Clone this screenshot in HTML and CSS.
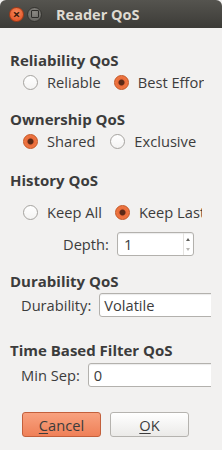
FILE: index.html
```html
<!DOCTYPE html>
<html lang="en">
<head>
  <meta charset="UTF-8">
  <title>Reader QoS</title>
  <link rel="stylesheet" href="styles.css">
</head>
<body>
  <div class="window">
    <div class="titlebar">
      <span class="win-btn close">&#215;</span>
      <span class="win-btn maximize"><span class="square"></span></span>
      <span class="title">Reader QoS</span>
    </div>

    <div class="content">
      <div class="group">
        <div class="heading">Reliability QoS</div>
        <div class="radio-row">
          <label class="option"><input type="radio" name="reliability"> Reliable</label>
          <label class="option"><input type="radio" name="reliability" checked> Best Effort</label>
        </div>
      </div>

      <div class="group">
        <div class="heading">Ownership QoS</div>
        <div class="radio-row">
          <label class="option wide"><input type="radio" name="ownership" checked> Shared</label>
          <label class="option"><input type="radio" name="ownership"> Exclusive</label>
        </div>
      </div>

      <div class="group history">
        <div class="heading">History QoS</div>
        <div class="radio-row">
          <label class="option"><input type="radio" name="history"> Keep All</label>
          <label class="option"><input type="radio" name="history" checked> Keep Last</label>
        </div>
        <div class="field-row depth-row">
          <span class="field-label">Depth:</span>
          <div class="spinbox">
            <span class="spin-value">1</span>
            <span class="spin-arrows">
              <span class="arrow-up"></span>
              <span class="arrow-down"></span>
            </span>
          </div>
        </div>
      </div>

      <div class="group durability">
        <div class="heading">Durability QoS</div>
        <div class="field-row">
          <span class="field-label">Durability:</span>
          <div class="combo">Volatile</div>
        </div>
      </div>

      <div class="group time-filter">
        <div class="heading">Time Based Filter QoS</div>
        <div class="field-row">
          <span class="field-label">Min Sep:</span>
          <div class="text-input">0</div>
        </div>
      </div>

      <div class="buttons">
        <button class="btn btn-cancel"><u>C</u>ancel</button>
        <button class="btn btn-ok"><u>O</u>K</button>
      </div>
    </div>
  </div>
</body>
</html>
```

FILE: styles.css
```css
body {
  margin: 0;
  width: 222px;
  height: 450px;
  background-color: #f2f1f0;
  font-family: "Open Sans", sans-serif;
  font-size: 14.67px;
  color: #3c3c3c;
  overflow: hidden;
}

.titlebar {
  height: 28px;
  display: flex;
  align-items: center;
  padding-left: 9px;
  border-radius: 6px 6px 0 0;
  background: linear-gradient(#55544f, #3c3b37);
}

.win-btn {
  width: 15px;
  height: 15px;
  border-radius: 50%;
  display: flex;
  align-items: center;
  justify-content: center;
  box-sizing: border-box;
}

.close {
  background: radial-gradient(circle at 50% 35%, #f58a5c, #df4a1d);
  border: 1px solid #a63a16;
  color: #3b1a0c;
  font-size: 13px;
  font-weight: bold;
  line-height: 1;
}

.maximize {
  margin-left: 3px;
  background: radial-gradient(circle at 50% 35%, #8a8883, #5d5c58);
  border: 1px solid #353430;
}

.square {
  width: 6px;
  height: 6px;
  border: 1px solid #2e2d2a;
  border-radius: 1px;
}

.title {
  margin-left: 14px;
  font-weight: bold;
  font-size: 14.5px;
  color: #dfdbd2;
}

.content {
  width: 201px;
  padding: 23px 0 0 10px;
  overflow: hidden;
}

.heading {
  height: 18px;
  line-height: 18px;
  font-weight: bold;
  font-size: 15px;
  white-space: nowrap;
}

.group + .group {
  margin-top: 18px;
}

.group.history {
  margin-top: 20px;
}

.group.durability {
  margin-top: 16px;
}

.group.time-filter {
  margin-top: 24px;
}

/* the dialog is narrower than its content, so long labels get cut */
.radio-row {
  height: 20px;
  margin-top: 3px;
  padding-left: 13px;
  width: 181px;
  display: flex;
  align-items: center;
  gap: 13px;
  overflow: hidden;
  white-space: nowrap;
}

.history .radio-row {
  margin-top: 13px;
  width: 179px;
}

.option {
  display: flex;
  align-items: center;
  gap: 9px;
  flex-shrink: 0;
}

.option.wide {
  margin-right: 2px;
}

.option input {
  appearance: none;
  -webkit-appearance: none;
  margin: 0;
  width: 15px;
  height: 15px;
  border-radius: 50%;
  border: 1px solid #a5a39f;
  background: linear-gradient(#ffffff, #f4f3f2);
  box-sizing: border-box;
}

.option input:checked {
  border-color: #c4521f;
  background: radial-gradient(circle, #5b2a17 0, #5b2a17 2.5px, #ea6b39 3.5px, #f2844f 100%);
}

.field-row {
  display: flex;
  align-items: center;
  gap: 8px;
  margin-top: 3px;
  padding-left: 11px;
  white-space: nowrap;
}

.depth-row {
  margin-top: 10px;
  padding-left: 53px;
}

.time-filter .field-row {
  margin-top: 4px;
}

.spinbox,
.combo,
.text-input {
  height: 24px;
  box-sizing: border-box;
  border: 1px solid #b3b1ad;
  border-radius: 3px;
  background-color: #ffffff;
  box-shadow: inset 0 1px 1px rgba(0, 0, 0, 0.08);
  display: flex;
  align-items: center;
  padding-left: 6px;
  flex-shrink: 0;
}

.spinbox {
  width: 77px;
  padding-left: 0;
}

.spin-value {
  flex: 1;
  padding-left: 6px;
}

.spin-arrows {
  width: 9px;
  height: 22px;
  border-left: 1px solid #e4e2df;
  display: flex;
  flex-direction: column;
  justify-content: center;
  align-items: center;
  gap: 7px;
}

.arrow-up {
  border-left: 2px solid transparent;
  border-right: 2px solid transparent;
  border-bottom: 3px solid #5f5e5a;
}

.arrow-down {
  border-left: 2px solid transparent;
  border-right: 2px solid transparent;
  border-top: 3px solid #b9b7b3;
}

.combo {
  width: 130px;
  padding-left: 4px;
}

.text-input {
  width: 140px;
  padding-left: 5px;
}

.buttons {
  display: flex;
  gap: 9px;
  margin-top: 25px;
  padding-left: 12px;
}

.btn {
  width: 79px;
  height: 25px;
  border-radius: 3px;
  font-family: "Open Sans", sans-serif;
  font-size: 14.67px;
  color: #3c3c3c;
  padding: 0;
}

.btn u {
  text-underline-offset: 2px;
}

.btn-cancel {
  border: 1px solid #c3603c;
  background: linear-gradient(#f8a27f, #ef8058);
}

.btn-ok {
  border: 1px solid #b5b3af;
  background: linear-gradient(#ffffff, #ebeae8);
}
```
